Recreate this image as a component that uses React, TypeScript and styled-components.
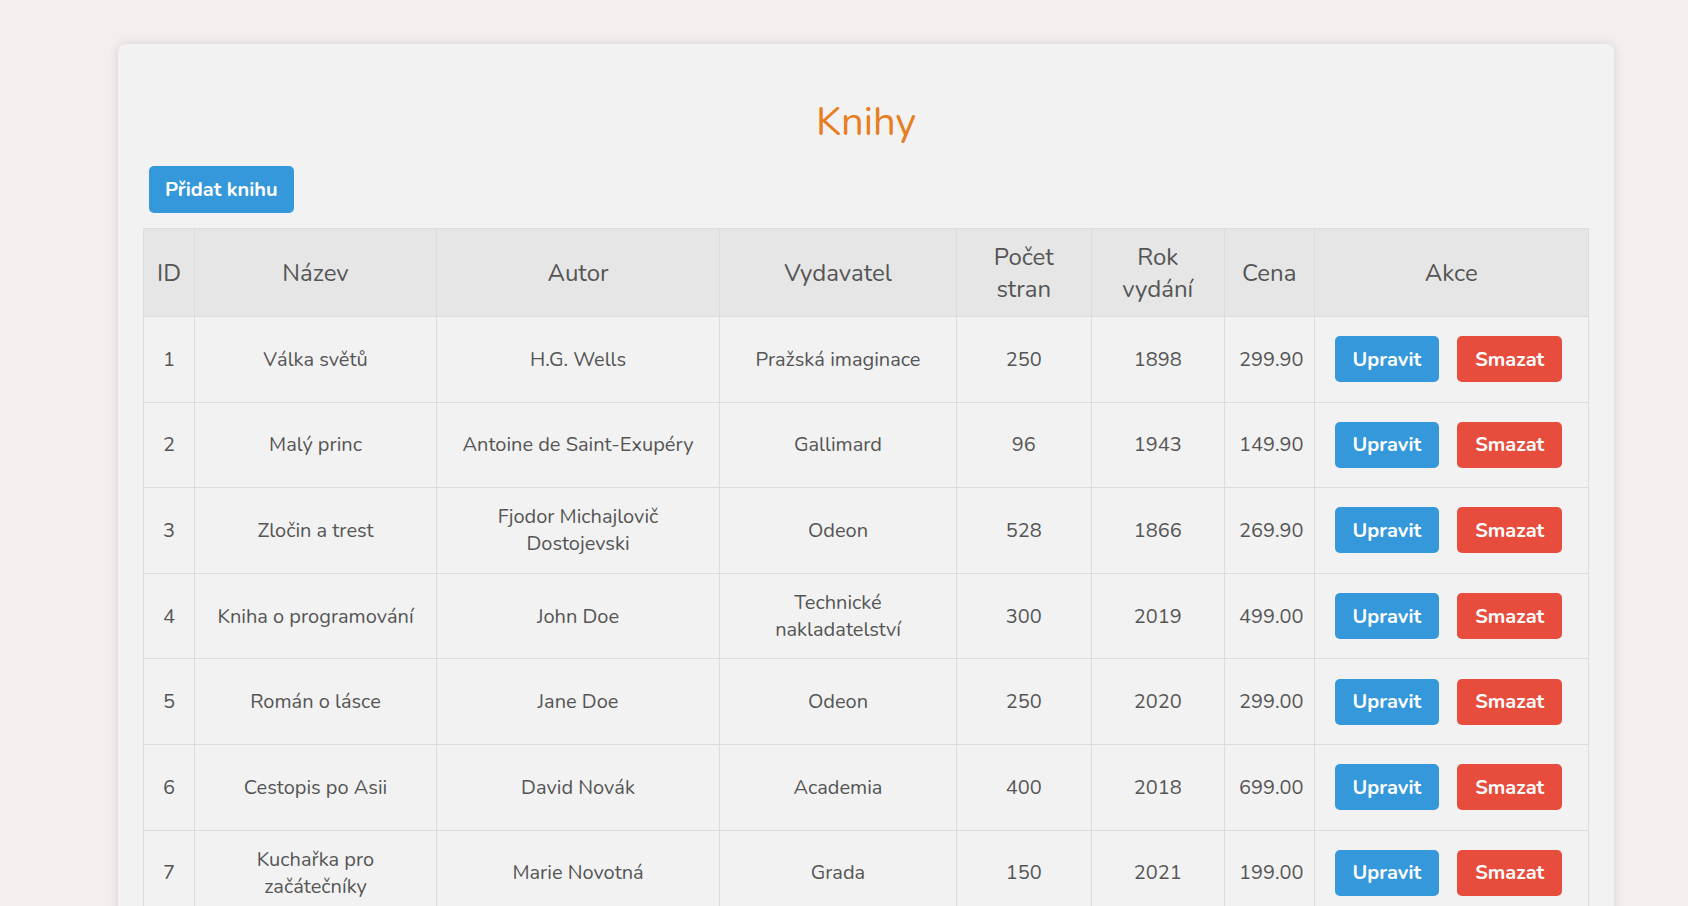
import React from "react";
import styled, { createGlobalStyle } from "styled-components";

const GlobalStyle = createGlobalStyle`
  html, body {
    margin: 0;
    padding: 0;
    background: #f5eeee;
    font-family: "Nunito", Lato, "Open Sans", sans-serif;
    color: #555;
  }
`;

const Page = styled.div`
  padding: 44px 0 0 118px;
`;

const Card = styled.div`
  width: 1496px;
  box-sizing: border-box;
  background: #f2f2f2;
  border-radius: 8px;
  box-shadow: 0 0 12px rgba(0, 0, 0, 0.12);
  padding: 25px 25px 40px;
`;

const Title = styled.h1`
  margin: 29px 0 20px;
  text-align: center;
  color: #e67e22;
  font-size: 40px;
  line-height: 48px;
  font-weight: 400;
`;

const Button = styled.button<{ $color: string }>`
  border: none;
  border-radius: 5px;
  background: ${(p) => p.$color};
  color: #fff;
  font-family: inherit;
  font-weight: 700;
  font-size: 20px;
  height: 46px;
  padding: 0 18px;
  cursor: pointer;
`;

const AddButton = styled(Button)`
  margin: 0 0 15px 6px;
  height: 47px;
  padding: 0 16px;
`;

const Table = styled.table`
  width: 1445px;
  table-layout: fixed;
  border-collapse: collapse;
`;

const Th = styled.th`
  background: #e6e6e6;
  border: 1px solid #dcdcdc;
  font-size: 24px;
  line-height: 32px;
  font-weight: 400;
  color: #555;
  height: 87px;
  padding: 0 10px;
  text-align: center;
`;

const Td = styled.td`
  border: 1px solid #dcdcdc;
  font-size: 20px;
  line-height: 27px;
  color: #555;
  height: 84.6px;
  padding: 0 14px;
  text-align: center;
  vertical-align: middle;
`;

const Actions = styled.div`
  display: flex;
  justify-content: flex-start;
  gap: 18px;
  padding-left: 6px;
`;

const cols = [51, 242, 283, 237, 134.5, 133.5, 89.5, 274.5];

const books = [
  { id: 1, nazev: "Válka světů", autor: "H.G. Wells", vydavatel: "Pražská imaginace", stran: 250, rok: 1898, cena: "299.90" },
  { id: 2, nazev: "Malý princ", autor: "Antoine de Saint-Exupéry", vydavatel: "Gallimard", stran: 96, rok: 1943, cena: "149.90" },
  { id: 3, nazev: "Zločin a trest", autor: "Fjodor Michajlovič Dostojevski", vydavatel: "Odeon", stran: 528, rok: 1866, cena: "269.90" },
  { id: 4, nazev: "Kniha o programování", autor: "John Doe", vydavatel: "Technické nakladatelství", stran: 300, rok: 2019, cena: "499.00" },
  { id: 5, nazev: "Román o lásce", autor: "Jane Doe", vydavatel: "Odeon", stran: 250, rok: 2020, cena: "299.00" },
  { id: 6, nazev: "Cestopis po Asii", autor: "David Novák", vydavatel: "Academia", stran: 400, rok: 2018, cena: "699.00" },
  { id: 7, nazev: "Kuchařka pro začátečníky", autor: "Marie Novotná", vydavatel: "Grada", stran: 150, rok: 2021, cena: "199.00" },
];

export default function App() {
  return (
    <Page>
      <GlobalStyle />
      <Card>
        <Title>Knihy</Title>
        <AddButton $color="#3498db">Přidat knihu</AddButton>
        <Table>
          <colgroup>
            {cols.map((w, i) => (
              <col key={i} style={{ width: w }} />
            ))}
          </colgroup>
          <thead>
            <tr>
              <Th>ID</Th>
              <Th>Název</Th>
              <Th>Autor</Th>
              <Th>Vydavatel</Th>
              <Th>Počet<br />stran</Th>
              <Th>Rok<br />vydání</Th>
              <Th>Cena</Th>
              <Th>Akce</Th>
            </tr>
          </thead>
          <tbody>
            {books.map((b) => (
              <tr key={b.id}>
                <Td>{b.id}</Td>
                <Td>{b.nazev}</Td>
                <Td>{b.autor}</Td>
                <Td>{b.vydavatel}</Td>
                <Td>{b.stran}</Td>
                <Td>{b.rok}</Td>
                <Td>{b.cena}</Td>
                <Td>
                  <Actions>
                    <Button $color="#3498db">Upravit</Button>
                    <Button $color="#e74c3c">Smazat</Button>
                  </Actions>
                </Td>
              </tr>
            ))}
          </tbody>
        </Table>
      </Card>
    </Page>
  );
}
